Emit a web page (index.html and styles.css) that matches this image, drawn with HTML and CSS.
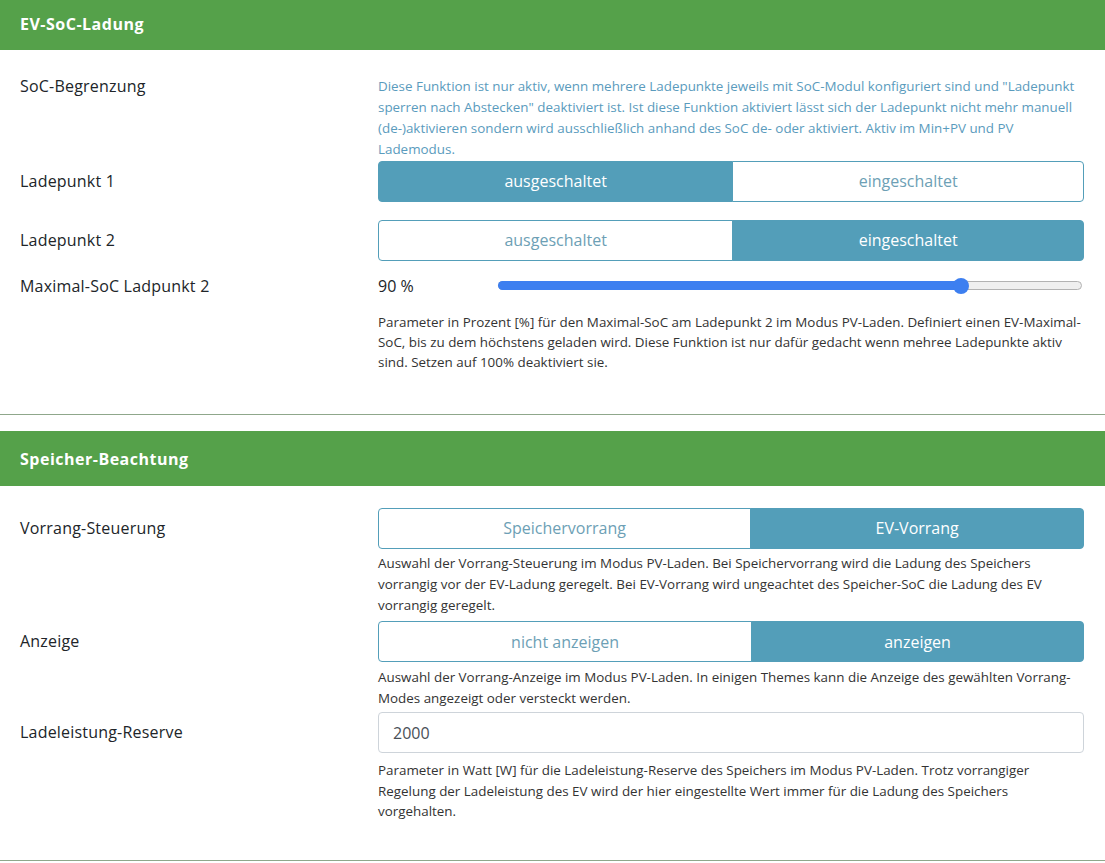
FILE: index.html
```html
<!DOCTYPE html>
<html lang="de">
<head>
<meta charset="utf-8">
<link rel="stylesheet" href="styles.css">
</head>
<body>
<div class="page">
  <section class="card">
    <div class="card-header">EV-SoC-Ladung</div>
    <div class="card-body body-first">
      <div class="row row-tight">
        <div class="label">SoC-Begrenzung</div>
        <div class="field">
          <p class="hint hint-info">Diese Funktion ist nur aktiv, wenn mehrere Ladepunkte jeweils mit SoC-Modul konfiguriert sind und "Ladepunkt sperren nach Abstecken" deaktiviert ist. Ist diese Funktion aktiviert lässt sich der Ladepunkt nicht mehr manuell (de-)aktivieren sondern wird ausschließlich anhand des SoC de- oder aktiviert. Aktiv im Min+PV und PV Lademodus.</p>
        </div>
      </div>
      <div class="row row-wide">
        <div class="label">Ladepunkt 1</div>
        <div class="field">
          <div class="btn-group">
            <button class="btn active">ausgeschaltet</button>
            <button class="btn">eingeschaltet</button>
          </div>
        </div>
      </div>
      <div class="row">
        <div class="label">Ladepunkt 2</div>
        <div class="field">
          <div class="btn-group">
            <button class="btn">ausgeschaltet</button>
            <button class="btn active">eingeschaltet</button>
          </div>
        </div>
      </div>
      <div class="row">
        <div class="label">Maximal-SoC Ladpunkt 2</div>
        <div class="field">
          <div class="range-row">
            <span class="range-value">90 %</span>
            <div class="range">
              <div class="range-fill" style="width: 79.3%"></div>
              <div class="range-thumb" style="left: 79.3%"></div>
            </div>
          </div>
          <p class="hint hint-range">Parameter in Prozent [%] für den Maximal-SoC am Ladepunkt 2 im Modus PV-Laden. Definiert einen EV-Maximal-SoC, bis zu dem höchstens geladen wird. Diese Funktion ist nur dafür gedacht wenn mehree Ladepunkte aktiv sind. Setzen auf 100% deaktiviert sie.</p>
        </div>
      </div>
    </div>
  </section>

  <section class="card">
    <div class="card-header">Speicher-Beachtung</div>
    <div class="card-body body-second">
      <div class="row">
        <div class="label">Vorrang-Steuerung</div>
        <div class="field">
          <div class="btn-group">
            <button class="btn">Speichervorrang</button>
            <button class="btn active">EV-Vorrang</button>
          </div>
          <p class="hint">Auswahl der Vorrang-Steuerung im Modus PV-Laden. Bei Speichervorrang wird die Ladung des Speichers vorrangig vor der EV-Ladung geregelt. Bei EV-Vorrang wird ungeachtet des Speicher-SoC die Ladung des EV vorrangig geregelt.</p>
        </div>
      </div>
      <div class="row row-short">
        <div class="label">Anzeige</div>
        <div class="field">
          <div class="btn-group">
            <button class="btn">nicht anzeigen</button>
            <button class="btn active">anzeigen</button>
          </div>
          <p class="hint">Auswahl der Vorrang-Anzeige im Modus PV-Laden. In einigen Themes kann die Anzeige des gewählten Vorrang-Modes angezeigt oder versteckt werden.</p>
        </div>
      </div>
      <div class="row">
        <div class="label">Ladeleistung-Reserve</div>
        <div class="field">
          <input class="input" type="text" value="2000">
          <p class="hint hint-input">Parameter in Watt [W] für die Ladeleistung-Reserve des Speichers im Modus PV-Laden. Trotz vorrangiger Regelung der Ladeleistung des EV wird der hier eingestellte Wert immer für die Ladung des Speichers vorgehalten.</p>
        </div>
      </div>
    </div>
  </section>
</div>
</body>
</html>
```

FILE: styles.css
```css
* { box-sizing: border-box; }
html, body { margin: 0; padding: 0; background: #fff; }
body {
  font-family: "Open Sans", "Segoe UI", sans-serif;
  color: #212529;
  font-size: 16px;
  line-height: 24px;
  overflow: hidden;
}
.page { margin-top: -5px; }
.card {
  border-bottom: 1px solid #8fa78b;
  margin-bottom: 16px;
}
.card-header {
  background: #55a14a;
  color: #fff;
  font-weight: 700;
  letter-spacing: 0.5px;
  height: 55px;
  padding: 2px 20px 0;
  display: flex;
  align-items: center;
}
.card-body { padding: 0 21px 0 20px; }
.body-first { padding-top: 16px; padding-bottom: 42px; }
.body-second { padding-top: 22px; padding-bottom: 38px; }
.row {
  display: grid;
  grid-template-columns: 358px 1fr;
  margin-bottom: 5px;
}
.row-tight { margin-bottom: 0; }
.row-wide { margin-bottom: 18px; }
.row-short { margin-bottom: 3.5px; }
.row:last-child { margin-bottom: 0; }
.label { padding-top: 8px; letter-spacing: 0.2px; }
.hint {
  margin: 0;
  font-size: 13.4px;
  line-height: 21px;
  color: #333;
}
.hint-info { color: #5a9bbd; padding-top: 9.5px; line-height: 21.3px; }
.btn-group { display: flex; }
.btn {
  flex: 1 1 auto;
  font: inherit;
  height: 41px;
  padding: 0 12px;
  background: #fff;
  color: #6d9fb5;
  border: 1px solid #539eb9;
  cursor: pointer;
}
.btn:first-child { border-radius: 4px 0 0 4px; }
.btn:last-child { border-radius: 0 4px 4px 0; margin-left: -1px; }
.btn.active { background: #539eb9; color: #fff; }
.btn-group + .hint { margin-top: 4.5px; }
.range-row {
  display: flex;
  align-items: center;
  height: 40px;
}
.range-value { width: 120px; flex: none; }
.range {
  position: relative;
  flex: 1;
  height: 9px;
  margin-right: 2px;
  border-radius: 5px;
  border: 1px solid #b2b2b2;
  background: #efefef;
}
.range-fill {
  position: absolute;
  left: -1px; top: -1px; bottom: -1px;
  background: #3d7ff0;
  border-radius: 5px 0 0 5px;
}
.range-thumb {
  position: absolute;
  top: 50%;
  width: 16px; height: 16px;
  margin: -8px 0 0 -8px;
  border-radius: 50%;
  background: #3d7ff0;
}
.hint-range { margin-top: 6px; line-height: 20px; }
.input {
  display: block;
  width: 100%;
  height: 41px;
  font: inherit;
  color: #495057;
  padding: 0 14px;
  border: 1px solid #ced4da;
  border-radius: 4px;
  background: #fff;
}
.hint-input { margin-top: 7px; line-height: 20.5px; }
```
